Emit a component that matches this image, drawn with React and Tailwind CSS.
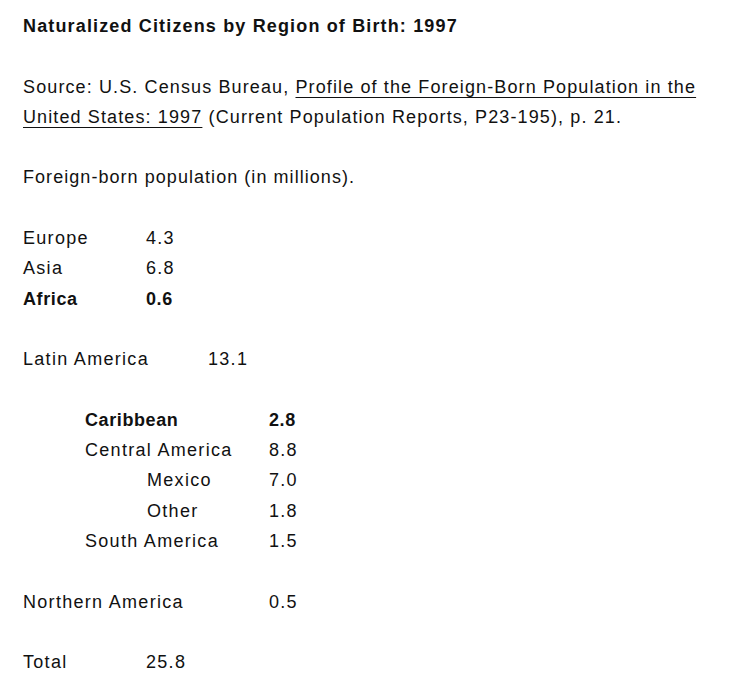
import React from 'react';

// Rows of the table: label, value, indent (px of label start), value column (px)
const rows = [
  { label: 'Europe', value: '4.3', indent: 23, col: 146 },
  { label: 'Asia', value: '6.8', indent: 23, col: 146 },
  { label: 'Africa', value: '0.6', indent: 23, col: 146, bold: true },
  null,
  { label: 'Latin America', value: '13.1', indent: 23, col: 208 },
  null,
  { label: 'Caribbean', value: '2.8', indent: 85, col: 269, bold: true },
  { label: 'Central America', value: '8.8', indent: 85, col: 269 },
  { label: 'Mexico', value: '7.0', indent: 147, col: 269 },
  { label: 'Other', value: '1.8', indent: 147, col: 269 },
  { label: 'South America', value: '1.5', indent: 85, col: 269 },
  null,
  { label: 'Northern America', value: '0.5', indent: 23, col: 269 },
  null,
  { label: 'Total', value: '25.8', indent: 23, col: 146 },
];

function Row({ row }) {
  if (!row) return <div className="h-[30.3px]" />;
  return (
    <div
      className={`flex h-[30.3px] items-center ${row.bold ? 'font-bold tracking-[0.6px]' : ''}`}
      style={{ paddingLeft: row.indent }}
    >
      <span className="shrink-0" style={{ width: row.col - row.indent }}>
        {row.label}
      </span>
      <span>{row.value}</span>
    </div>
  );
}

export default function App() {
  return (
    <div className="w-[750px] h-[686px] bg-white text-[#111] font-['Liberation_Sans',Arial,sans-serif] text-[18px] tracking-[1.3px] leading-[30.3px] pt-[11px] overflow-hidden">
      <div className="pl-[23px] font-bold tracking-[1.15px]">
        Naturalized Citizens by Region of Birth: 1997
      </div>
      <div className="h-[30.3px]" />
      <div className="pl-[23px] whitespace-nowrap tracking-[1.12px]">
        Source: U.S. Census Bureau,{' '}
        <span className="underline underline-offset-[4px]">
          Profile of the Foreign-Born Population in the
          <br />
          United States: 1997
        </span>{' '}
        (Current Population Reports, P23-195), p. 21.
      </div>
      <div className="h-[30.3px]" />
      <div className="pl-[23px] tracking-[1.05px]">Foreign-born population (in millions).</div>
      <div className="h-[30.3px]" />
      {rows.map((r, i) => (
        <Row key={i} row={r} />
      ))}
    </div>
  );
}
